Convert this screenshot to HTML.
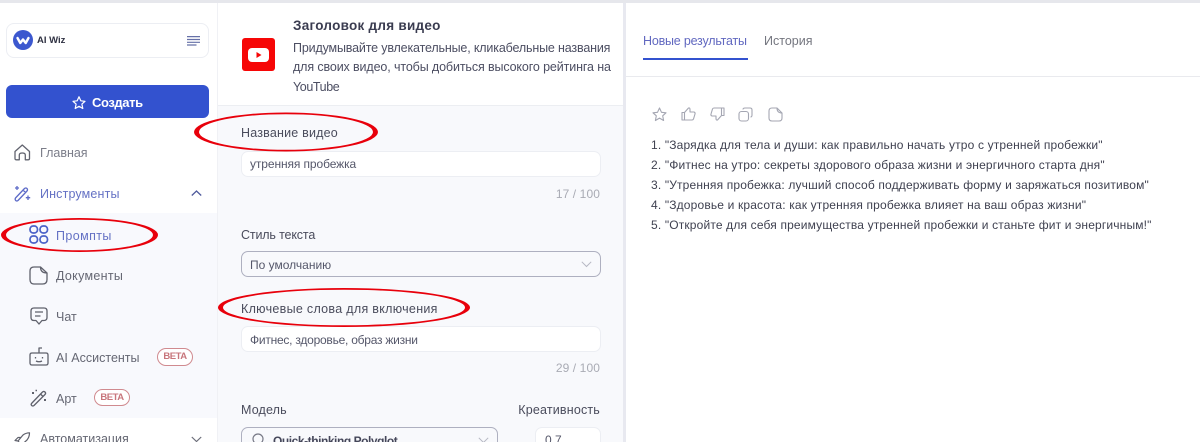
<!DOCTYPE html>
<html lang="ru"><head><meta charset="utf-8"><title>AI Wiz</title>
<style>
html,body{margin:0;padding:0;background:#fff}
#p{position:relative;width:1200px;height:442px;overflow:hidden;background:#fff;font-family:"Liberation Sans",sans-serif;color:#3d3f4e}
.a{position:absolute}
.t{position:absolute;white-space:nowrap;font-size:12.5px;line-height:16px;color:#45475a}
.box{position:absolute;box-sizing:border-box;background:#fff;border:1px solid #eceef3;border-radius:7px}
.sel{border:1px solid #aeb0c0;background:#f8f9fc}
.beta{position:absolute;box-sizing:border-box;width:36px;height:18px;border:1px solid #d08a8f;border-radius:9px;font-size:9.500px;letter-spacing:-.45px;font-weight:bold;line-height:16px;text-align:center;color:#c8767c;background:#fff}
.d{color:#4c4e62;letter-spacing:-.16px}
.r{font-size:12px;color:#3f4150;letter-spacing:.16px}
svg{position:absolute;overflow:visible;fill:none}
</style></head><body><div id="p">
<div class="a" style="left:0;top:0;width:1200px;height:3px;background:#e6e7ec"></div>
<div class="a" style="left:0;top:213px;width:217px;height:205px;background:#f8f9fd"></div>
<div class="a" style="left:217px;top:3px;width:1px;height:439px;background:#f0f1f5"></div>
<div class="a" style="left:218px;top:105px;width:405px;height:337px;background:#f8f9fc"></div>
<div class="a" style="left:218px;top:105px;width:405px;height:1px;background:#eceef2"></div>
<div class="a" style="left:623px;top:3px;width:3px;height:439px;background:#e8e9f0"></div>
<div class="a" style="left:626px;top:76px;width:574px;height:1px;background:#e9eaee"></div>

<!-- Sidebar -->
<div class="box" style="left:6px;top:23px;width:203px;height:35px;border-radius:8px"></div>
<div class="a" style="left:13px;top:30px;width:20px;height:20px;border-radius:50%;background:#3c58cf"></div>
<svg style="left:13px;top:30px" width="20" height="20"><path d="M4.500 8 L7.300 13 L10 9.500 L12.700 13 L15.500 8" stroke="#fff" stroke-width="2.400" stroke-linejoin="round" stroke-linecap="round"/></svg>
<div class="t" style="left:37px;top:33px;font-size:9.500px;font-weight:bold;color:#2f3142">AI Wiz</div>
<svg style="left:187px;top:36px" width="14" height="10" stroke="#6670a8" stroke-width="1.200"><path d="M0 .6H13M0 3.500H13M0 6.300H13M0 9H9.500"/></svg>

<div class="a" style="left:6px;top:85px;width:203px;height:33px;border-radius:6px;background:#3352cf"></div>
<svg style="left:72px;top:96px" width="14" height="14" stroke="#fff" stroke-width="1.200" stroke-linejoin="round"><path d="M7 .8L8.800 4.800 13 5.300 9.900 8.100 10.800 12.500 7 10.300 3.200 12.500 4.100 8.100 1 5.300 5.200 4.800Z"/></svg>
<div class="t" style="left:92px;top:95px;font-size:13px;font-weight:bold;color:#fff;letter-spacing:-.4px">Создать</div>

<svg style="left:14px;top:144px" width="17" height="17" stroke="#62646f" stroke-width="1.300" stroke-linejoin="round"><path d="M1 7.500L8.300 1 15.500 7.500V14.500Q15.500 15.800 14 15.800H11.300V11Q11.300 9 8.300 9 5.300 9 5.300 11V15.800H2.500Q1 15.800 1 14.500Z"/></svg>
<div class="t" style="left:40px;top:145px;color:#7b7d89">Главная</div>

<svg style="left:14px;top:185px" width="17" height="17" stroke="#5d6bc8" stroke-width="1.300" stroke-linejoin="round"><path d="M1.500 13L10.500 3.500Q11.800 2.500 13 3.500 14 4.700 13 6L4 15.500Q2.800 16.500 1.700 15.500 .7 14.300 1.500 13ZM9 5L11.500 7.500M3 1V5M1 3H5M14 10.500V15M11.800 12.700H16.200"/></svg>
<div class="t" style="left:40px;top:186px;color:#6471c4;letter-spacing:.15px">Инструменты</div>
<svg style="left:191px;top:190px" width="11" height="7" stroke="#4f5a9c" stroke-width="1.300"><path d="M.8 5.500L5.500 1 10.200 5.500"/></svg>

<svg style="left:29px;top:225px" width="20" height="19" stroke="#4b62c8" stroke-width="1.700"><rect x="1" y="1" width="7.500" height="7" rx="3.200"/><rect x="11" y="1" width="7.500" height="7" rx="3.200"/><rect x="1" y="11" width="7.500" height="7" rx="3.200"/><rect x="11" y="11" width="7.500" height="7" rx="3.200"/></svg>
<div class="t" style="left:56px;top:228px;color:#6471c4;letter-spacing:.4px">Промпты</div>

<svg style="left:29px;top:266px" width="19" height="19" stroke="#5f616c" stroke-width="1.300" stroke-linejoin="round"><path d="M5 1H11.500Q11.500 7 18 7V13.500Q18 18 13.500 18H5Q1 18 1 13.500V5Q1 1 5 1ZM11.500 1L18 7"/></svg>
<div class="t" style="left:56px;top:268px;color:#656773;letter-spacing:.3px">Документы</div>

<svg style="left:30px;top:307px" width="18" height="19" stroke="#5f616c" stroke-width="1.300" stroke-linejoin="round"><path d="M4 1H14Q17 1 17 4V10.500Q17 13.500 14 13.500H12L9 17 6 13.500H4Q1 13.500 1 10.500V4Q1 1 4 1ZM5 5H13M5 9H10.500"/></svg>
<div class="t" style="left:56px;top:309px;color:#656773">Чат</div>

<svg style="left:29px;top:347px" width="20" height="20" stroke="#5f616c" stroke-width="1.300" stroke-linejoin="round"><path d="M3 6H17Q19 6 19 8V16Q19 18 17 18H3Q1 18 1 16V8Q1 6 3 6ZM10 6V1H13M6.500 10V11.500M13.500 10V11.500M7 14Q10 15.500 13 14"/></svg>
<div class="t" style="left:56px;top:350px;color:#656773">AI Ассистенты</div>
<div class="beta" style="left:157px;top:348px">BETA</div>

<svg style="left:30px;top:389px" width="18" height="18" stroke="#5f616c" stroke-width="1.300" stroke-linejoin="round"><path d="M1.500 14.500L12.500 3Q13.800 1.800 15 3 16.200 4.300 15 5.500L4 16.500Q2.800 17.500 1.700 16.500 .7 15.500 1.500 14.500ZM10.500 5L13 7.500"/><path d="M2 3h2v2h-2zM5.500 0.800h1.500v1.500h-1.500zM14 10h2v2h-2z" fill="#5f616c" stroke="none"/></svg>
<div class="t" style="left:56px;top:391px;color:#656773">Арт</div>
<div class="beta" style="left:94px;top:389px;height:17px;line-height:15px">BETA</div>

<svg style="left:14px;top:432px" width="17" height="17" stroke="#5f616c" stroke-width="1.200" stroke-linejoin="round"><path d="M4 9L9 3Q12 .8 15.500 .8 15.500 5 13 8L7.500 13ZM4 9L1 8.500 4 5.500H7M7.500 13L8 16 11 13V10M4 12L1.500 15"/></svg>
<div class="t" style="left:40px;top:431px;color:#656773">Автоматизация</div>
<svg style="left:191px;top:436px" width="11" height="7" stroke="#6c6e7a" stroke-width="1.200"><path d="M.8 1L5.500 5.500 10.200 1"/></svg>

<!-- Middle -->
<div class="a" style="left:242px;top:38px;width:33px;height:33px;border-radius:3px;background:#f60606"></div>
<div class="a" style="left:248px;top:48px;width:21px;height:14px;border-radius:4px;background:#fff"></div>
<svg style="left:248px;top:48px" width="21" height="14"><path d="M8.500 4L13.500 7 8.500 10Z" fill="#f60606"/></svg>
<div class="t" style="left:293px;top:18px;font-size:13.500px;font-weight:bold;color:#3a3c50;letter-spacing:.27px">Заголовок для видео</div>
<div class="t d" style="left:293px;top:40px">Придумывайте увлекательные, кликабельные названия</div>
<div class="t d" style="left:293px;top:59px;letter-spacing:-.12px">для своих видео, чтобы добиться высокого рейтинга на</div>
<div class="t d" style="left:293px;top:79px;letter-spacing:-.4px">YouTube</div>

<div class="t" style="left:241px;top:125px;color:#4a4c5c;letter-spacing:.2px">Название видео</div>
<div class="box" style="left:241px;top:151px;width:360px;height:26px"></div>
<div class="t" style="left:250px;top:156px;font-size:12px;color:#55576a;letter-spacing:-.1px">утренняя пробежка</div>
<div class="t" style="right:600px;top:186px;font-size:12px;color:#a9abb4;letter-spacing:.1px">17 / 100</div>

<div class="t" style="left:241px;top:227px;color:#4a4c5c;letter-spacing:-.15px">Стиль текста</div>
<div class="box sel" style="left:241px;top:251px;width:360px;height:26px"></div>
<div class="t" style="left:250px;top:257px;font-size:12px;color:#55576a">По умолчанию</div>
<svg style="left:581px;top:261px" width="11" height="7" stroke="#b6b8c3" stroke-width="1"><path d="M.8 .8L5.500 5.500 10.200 .8"/></svg>

<div class="t" style="left:241px;top:301px;color:#4a4c5c;letter-spacing:.3px">Ключевые слова для включения</div>
<div class="box" style="left:241px;top:326px;width:360px;height:26px"></div>
<div class="t" style="left:250px;top:332px;font-size:12px;color:#55576a;letter-spacing:-.24px">Фитнес, здоровье, образ жизни</div>
<div class="t" style="right:600px;top:360px;font-size:12px;color:#a9abb4;letter-spacing:.1px">29 / 100</div>

<div class="t" style="left:241px;top:402px;color:#4a4c5c;letter-spacing:.15px">Модель</div>
<div class="t" style="right:600px;top:402px;color:#4a4c5c;letter-spacing:.18px">Креативность</div>
<div class="box sel" style="left:241px;top:427px;width:257px;height:26px"></div>
<svg style="left:252px;top:433px" width="12" height="12" stroke="#777986" stroke-width="1.200"><circle cx="6" cy="6" r="5"/></svg>
<div class="t" style="left:273px;top:433px;font-size:12px;color:#45475a;font-weight:bold;letter-spacing:-.45px">Quick-thinking Polyglot</div>
<svg style="left:478px;top:437px" width="11" height="7" stroke="#b6b8c3" stroke-width="1"><path d="M.8 .8L5.500 5.500 10.200 .8"/></svg>
<div class="box" style="left:535px;top:427px;width:66px;height:26px"></div>
<div class="t" style="left:545px;top:432px;font-size:12px;color:#55576a">0.7</div>

<!-- Ellipses -->
<svg style="left:0;top:0" width="1200" height="442">
<path fill="#e8000b" fill-rule="evenodd" d="M194 132a92 19.500 0 1 0 184 0a92 19.500 0 1 0 -184 0ZM199 132a87 17.800 0 1 0 174 0a87 17.800 0 1 0 -174 0Z"/>
<path fill="#e8000b" fill-rule="evenodd" d="M218 307.500a126 19.500 0 1 0 252 0a126 19.500 0 1 0 -252 0ZM223 307.500a121 17.800 0 1 0 242 0a121 17.800 0 1 0 -242 0Z"/>
<path fill="#e8000b" fill-rule="evenodd" d="M1 235a78.500 17 0 1 0 157 0a78.500 17 0 1 0 -157 0ZM6 235a73.500 15.300 0 1 0 147 0a73.500 15.300 0 1 0 -147 0Z"/>
</svg>

<!-- Right -->
<div class="t" style="left:643px;top:33px;color:#6168c0;letter-spacing:-.2px">Новые результаты</div>
<div class="t" style="left:764px;top:33px;color:#74767f">История</div>
<div class="a" style="left:643px;top:58px;width:105px;height:2px;background:#3352cf"></div>

<svg style="left:652px;top:107px" width="15" height="15" stroke="#a4a6b2" stroke-width="1.100" stroke-linejoin="round"><path d="M7.500 1L9.500 5.300 14 5.800 10.700 8.800 11.600 13.500 7.500 11.100 3.400 13.500 4.300 8.800 1 5.800 5.500 5.300Z"/></svg>
<svg style="left:681px;top:107px" width="15" height="14" stroke="#a4a6b2" stroke-width="1.100" stroke-linejoin="round"><path d="M1 5.500H3.500V13H1ZM3.500 5.500L7.500 1Q9 .5 9 2.500V5H13Q14.500 5.500 14 7L12.500 12Q12 13 11 13H3.500"/></svg>
<svg style="left:710px;top:107px" width="15" height="14" stroke="#a4a6b2" stroke-width="1.100" stroke-linejoin="round"><path d="M14 8.500H11.500V1H14ZM11.500 8.500L7.500 13Q6 13.500 6 11.500V9H2Q.5 8.500 1 7L2.500 2Q3 1 4 1H11.500"/></svg>
<svg style="left:738px;top:107px" width="15" height="15" stroke="#a4a6b2" stroke-width="1.100"><rect x="1" y="4.500" width="9.500" height="9.500" rx="2.500"/><path d="M5 2.500Q5 1 7 1H12Q14 1 14 3V8Q14 10 12.500 10"/></svg>
<svg style="left:768px;top:107px" width="15" height="15" stroke="#a4a6b2" stroke-width="1.100" stroke-linejoin="round"><path d="M4 1H9Q9 6 14 6V11Q14 14 11 14H4Q1 14 1 11V4Q1 1 4 1ZM9 1L14 6"/></svg>

<div class="t r" style="left:651px;top:137px">1. "Зарядка для тела и души: как правильно начать утро с утренней пробежки"</div>
<div class="t r" style="left:651px;top:157px">2. "Фитнес на утро: секреты здорового образа жизни и энергичного старта дня"</div>
<div class="t r" style="left:651px;top:177px">3. "Утренняя пробежка: лучший способ поддерживать форму и заряжаться позитивом"</div>
<div class="t r" style="left:651px;top:197px">4. "Здоровье и красота: как утренняя пробежка влияет на ваш образ жизни"</div>
<div class="t r" style="left:651px;top:217px">5. "Откройте для себя преимущества утренней пробежки и станьте фит и энергичным!"</div>
</div></body></html>
